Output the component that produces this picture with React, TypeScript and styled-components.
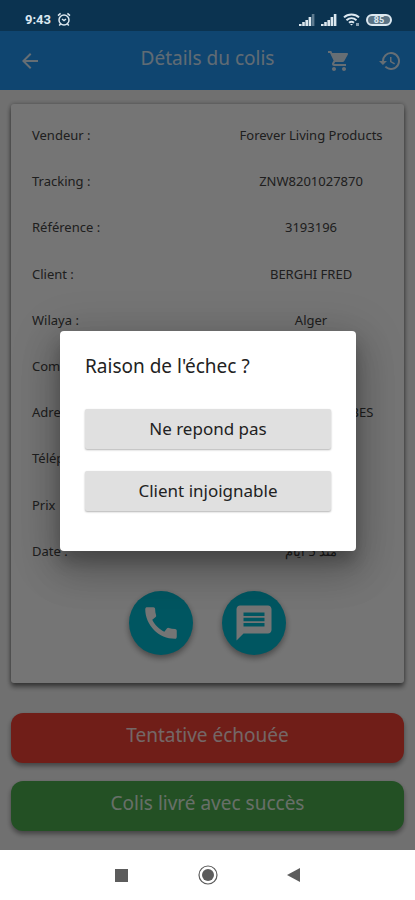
import React from "react";
import styled, { createGlobalStyle } from "styled-components";

const Global = createGlobalStyle`
  *, *::before, *::after { box-sizing: border-box; }
  body { margin: 0; background: #fff; }
  button { font: inherit; border: 0; margin: 0; padding: 0; cursor: pointer; color: inherit; }
`;

const Phone = styled.div`
  min-height: 100vh;
  display: flex;
  flex-direction: column;
  font-family: "Noto Sans", "Open Sans", sans-serif;
`;

const Screen = styled.div`
  position: relative;
  flex: 1;
  display: flex;
  flex-direction: column;
  background: #f4f4f4;
`;

const StatusBar = styled.header`
  position: relative;
  z-index: 2;
  height: 31px;
  display: flex;
  align-items: center;
  justify-content: space-between;
  padding: 8px 23px 0 25px;
  background: #0b3350;
  color: #dce8f0;
  font: 700 13px/16px Roboto, sans-serif;
`;

const StatusGroup = styled.div`
  display: flex;
  align-items: center;
  gap: 6px;
`;

const AppBar = styled.header`
  height: 59px;
  display: grid;
  grid-template-columns: 104px 1fr 104px;
  align-items: center;
  background: #2196f3;
  color: #fff;
`;

const AppTitle = styled.h1`
  margin: 0;
  padding-bottom: 6px;
  text-align: center;
  font-size: 19px;
  line-height: 28px;
  font-weight: 400;
  white-space: nowrap;
  opacity: 0.8;
`;

const BarActions = styled.div`
  display: flex;
  justify-content: space-between;
  padding-right: 12px;
  padding-left: 15px;
`;

const IconButton = styled.button`
  display: grid;
  place-items: center;
  width: 26px;
  height: 26px;
  background: none;
  opacity: 0.85;
`;

const BackButton = styled(IconButton)`
  margin-left: 17px;
`;

const Body = styled.main`
  flex: 1;
  display: flex;
  flex-direction: column;
  padding: 14px 11px 19px;
`;

const Card = styled.section`
  flex: 1;
  display: flex;
  flex-direction: column;
  padding: 8px 21px 28px;
  margin-bottom: 30px;
  border-radius: 3px;
  background: #fff;
  box-shadow: 0 4px 5px rgba(0, 0, 0, 0.45), 0 0 4px rgba(0, 0, 0, 0.3);
`;

const Details = styled.dl`
  flex: 1;
  margin: 0 0 17px;
  display: grid;
  grid-auto-rows: 1fr;
`;

const Row = styled.div`
  display: grid;
  grid-template-columns: 59fr 41fr;
  align-items: center;
  min-height: 40px;
  font-size: 13px;
  line-height: 20px;
  color: #444;
  white-space: nowrap;

  dt, dd { margin: 0; }
  dd { display: flex; justify-content: center; }
`;

const Contacts = styled.div`
  display: flex;
  justify-content: center;
  gap: 29px;
`;

const RoundButton = styled.button`
  display: grid;
  place-items: center;
  width: 64px;
  height: 64px;
  border-radius: 50%;
  background: #00bcd4;
  color: #fff;
  box-shadow: 0 3px 6px rgba(0, 0, 0, 0.4);
`;

const Actions = styled.div`
  display: grid;
  gap: 18px;
`;

const ActionButton = styled.button<{ $tone: "danger" | "success" }>`
  height: 50px;
  padding-bottom: 6px;
  border-radius: 12px;
  font-size: 19px;
  line-height: 28px;
  color: rgba(255, 255, 255, 0.85);
  box-shadow: 0 3px 5px rgba(0, 0, 0, 0.4);
  background: ${(p) => (p.$tone === "danger" ? "#f44336" : "#4caf50")};
`;

const Scrim = styled.div`
  position: absolute;
  inset: 0;
  z-index: 1;
  display: grid;
  place-items: center;
  padding: 31px 59px 0 60px;
  background: rgba(0, 0, 0, 0.54);
`;

const Dialog = styled.section`
  width: 100%;
  max-width: 400px;
  padding: 21px 25px 40px;
  border-radius: 4px;
  background: #fff;
  color: #222;
  box-shadow: 0 11px 15px rgba(0, 0, 0, 0.2), 0 20px 38px 3px rgba(0, 0, 0, 0.16),
    0 9px 46px 8px rgba(0, 0, 0, 0.14);
`;

const DialogTitle = styled.h2`
  margin: 0 0 29px;
  font-size: 19px;
  line-height: 28px;
  font-weight: 400;
`;

const Choices = styled.div`
  display: grid;
  gap: 22px;
`;

const ChoiceButton = styled.button`
  height: 40px;
  border-radius: 2px;
  background: #e0e0e0;
  font-size: 17px;
  line-height: 24px;
  box-shadow: 0 1px 2px rgba(0, 0, 0, 0.3);
`;

const NavBar = styled.nav`
  height: 50px;
  display: flex;
  justify-content: center;
  align-items: center;
  gap: 66px;
  background: #fff;
  color: #5c5c5c;
`;

const NavButton = styled.button`
  display: grid;
  place-items: center;
  width: 20px;
  height: 20px;
  background: none;
`;

const Glyph = ({ d, size = 24 }: { d: string; size?: number }) => (
  <svg width={size} height={size} viewBox="0 0 24 24" fill="currentColor" aria-hidden="true">
    <path d={d} />
  </svg>
);

const paths = {
  back: "M20 11H7.83l5.59-5.59L12 4l-8 8 8 8 1.41-1.41L7.83 13H20v-2z",
  cart: "M7 18c-1.1 0-1.99.9-1.99 2S5.9 22 7 22s2-.9 2-2-.9-2-2-2zM1 2v2h2l3.6 7.59-1.35 2.45c-.16.28-.25.61-.25.96 0 1.1.9 2 2 2h12v-2H7.42c-.14 0-.25-.11-.25-.25l.03-.12.9-1.63h7.45c.75 0 1.41-.41 1.75-1.03l3.58-6.49c.08-.14.12-.31.12-.48 0-.55-.45-1-1-1H5.21l-.94-2H1zm16 16c-1.1 0-1.99.9-1.99 2s.89 2 1.99 2 2-.9 2-2-.9-2-2-2z",
  history:
    "M13 3a9 9 0 0 0-9 9H1l3.89 3.89.07.14L9 12H6a7 7 0 1 1 2.06 4.94l-1.42 1.42A9 9 0 1 0 13 3zm-1 5v5l4.28 2.54.72-1.21-3.5-2.08V8H12z",
  phone:
    "M20.01 15.38c-1.23 0-2.42-.2-3.53-.56a.98.98 0 0 0-1.01.24l-1.57 1.97c-2.83-1.35-5.48-3.9-6.89-6.83l1.95-1.66c.27-.28.35-.67.24-1.02-.37-1.11-.56-2.3-.56-3.53 0-.54-.45-.99-.99-.99H4.19C3.65 3 3 3.24 3 3.99 3 13.28 10.73 21 20.01 21c.71 0 .99-.63.99-1.18v-3.45c0-.54-.45-.99-.99-.99z",
  message:
    "M20 2H4c-1.1 0-1.99.9-1.99 2L2 22l4-4h14c1.1 0 2-.9 2-2V4c0-1.1-.9-2-2-2zm-2 12H6v-2h12v2zm0-3H6V9h12v2zm0-3H6V6h12v2z",
};

const AlarmIcon = () => (
  <svg width="14" height="15" viewBox="0 0 14 15" fill="none" stroke="currentColor" strokeWidth="1.5" aria-hidden="true">
    <circle cx="7" cy="8" r="5" />
    <path d="M1 3.6 3.6 1.4M13 3.6 10.4 1.4M3.6 12l-1.4 1.6M10.4 12l1.4 1.6M5 7l2 1.6L9 7" />
  </svg>
);

const SignalIcon = ({ faded = false }: { faded?: boolean }) => (
  <svg width="16" height="12" viewBox="0 0 16 12" fill="currentColor" aria-hidden="true">
    <path d="M0 10h2.6v2H0zM3.2 8h2.6v4H3.2zM6.4 6H9v6H6.4zM9.6 3h2.6v9H9.6z" />
    <path d="M12.8 0h2.6v12h-2.6z" opacity={faded ? 0.4 : 1} />
  </svg>
);

const WifiIcon = () => (
  <svg width="17" height="13" viewBox="0 0 17 13" fill="none" stroke="currentColor" strokeWidth="2" aria-hidden="true">
    <path d="M1 4.4C5 .4 12 .4 16 4.4M3.5 7.2c3-2.7 7-2.7 10 0M6 9.8c1.6-1.3 3.4-1.3 5 0" />
    <path d="M8.5 12.6 7 11h3z" fill="currentColor" stroke="none" />
    <path d="M13 10h3v3h-3z" fill="currentColor" stroke="none" opacity=".6" />
  </svg>
);

const Battery = styled.span`
  display: grid;
  place-items: center;
  width: 26px;
  height: 12px;
  border: 2px solid currentColor;
  border-radius: 6px;
  background: #5b7486;
  font-size: 9px;
  line-height: 8px;
`;

const rows: { label: string; value?: string }[] = [
  { label: "Vendeur :", value: "Forever Living Products" },
  { label: "Tracking :", value: "ZNW8201027870" },
  { label: "Référence :", value: "3193196" },
  { label: "Client :", value: "BERGHI FRED" },
  { label: "Wilaya :", value: "Alger" },
  { label: "Commune :" },
  { label: "Adresse :", value: "CITE SIDI BEL ABBES" },
  { label: "Téléphone :" },
  { label: "Prix\u00a0 :" },
  { label: "Date :", value: "منذ 5 أيام" },
];

export default function App() {
  return (
    <Phone>
      <Global />
      <Screen>
        <StatusBar>
          <StatusGroup>
            <span>9:43</span>
            <AlarmIcon />
          </StatusGroup>
          <StatusGroup>
            <SignalIcon faded />
            <SignalIcon />
            <WifiIcon />
            <Battery>85</Battery>
          </StatusGroup>
        </StatusBar>
        <AppBar>
          <BackButton aria-label="Retour"><Glyph d={paths.back} /></BackButton>
          <AppTitle>Détails du colis</AppTitle>
          <BarActions>
            <IconButton aria-label="Panier">
              <svg width="24" height="24" viewBox="0 0 24 24" fill="currentColor" aria-hidden="true">
                <path d={paths.cart} />
                <path d="M5.2 4H20l-4 8H8z" />
              </svg>
            </IconButton>
            <IconButton aria-label="Historique"><Glyph d={paths.history} /></IconButton>
          </BarActions>
        </AppBar>
        <Body>
          <Card>
            <Details>
              {rows.map((r) => (
                <Row key={r.label}>
                  <dt>{r.label}</dt>
                  <dd dir="auto">{r.value}</dd>
                </Row>
              ))}
            </Details>
            <Contacts>
              <RoundButton aria-label="Appeler"><Glyph d={paths.phone} size={42} /></RoundButton>
              <RoundButton aria-label="Message"><Glyph d={paths.message} size={42} /></RoundButton>
            </Contacts>
          </Card>
          <Actions>
            <ActionButton $tone="danger">Tentative échouée</ActionButton>
            <ActionButton $tone="success">Colis livré avec succès</ActionButton>
          </Actions>
        </Body>
        <Scrim>
          <Dialog role="dialog" aria-modal="true" aria-labelledby="reason-title">
            <DialogTitle id="reason-title">Raison de l'échec ?</DialogTitle>
            <Choices>
              <ChoiceButton>Ne repond pas</ChoiceButton>
              <ChoiceButton>Client injoignable</ChoiceButton>
            </Choices>
          </Dialog>
        </Scrim>
      </Screen>
      <NavBar>
        <NavButton aria-label="Applications récentes">
          <svg width="13" height="13" viewBox="0 0 13 13" aria-hidden="true"><path d="M0 0h13v13H0z" fill="currentColor" /></svg>
        </NavButton>
        <NavButton aria-label="Accueil">
          <svg width="20" height="20" viewBox="0 0 20 20" aria-hidden="true">
            <circle cx="10" cy="10" r="9" fill="none" stroke="currentColor" strokeWidth="1.2" />
            <circle cx="10" cy="10" r="6" fill="currentColor" />
          </svg>
        </NavButton>
        <NavButton aria-label="Précédent">
          <svg width="13" height="14" viewBox="0 0 13 14" aria-hidden="true"><path d="M13 0v14L0 7z" fill="currentColor" /></svg>
        </NavButton>
      </NavBar>
    </Phone>
  );
}
